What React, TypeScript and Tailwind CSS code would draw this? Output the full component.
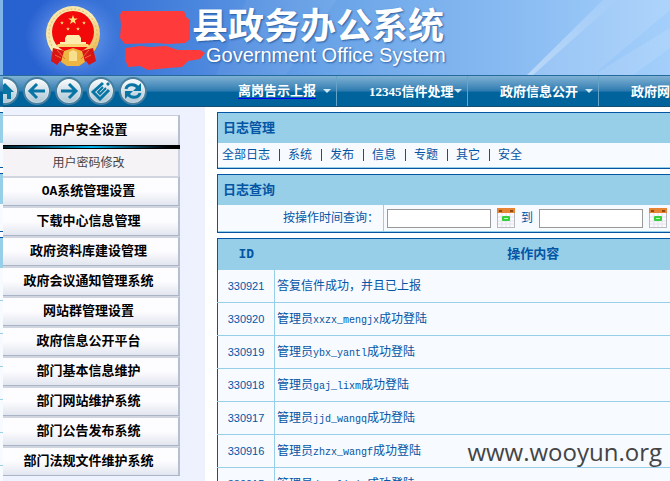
import type { ReactNode } from "react";

const cjk = "font-['Liberation_Sans','Noto_Sans_CJK_SC',sans-serif]";

const navItems = ["离岗告示上报", "12345信件处理", "政府信息公开", "政府网站管理"];

const sections = [
  "OA系统管理设置",
  "下载中心信息管理",
  "政府资料库建设管理",
  "政府会议通知管理系统",
  "网站群管理设置",
  "政府信息公开平台",
  "部门基本信息维护",
  "部门网站维护系统",
  "部门公告发布系统",
  "部门法规文件维护系统",
];

const filters = ["全部日志", "系统", "发布", "信息", "专题", "其它", "安全"];

const logs = [
  { id: "330921", user: "", text: "答复信件成功，并且已上报" },
  { id: "330920", user: "xxzx_mengjx", text: "成功登陆" },
  { id: "330919", user: "ybx_yantl", text: "成功登陆" },
  { id: "330918", user: "gaj_lixm", text: "成功登陆" },
  { id: "330917", user: "jjd_wangq", text: "成功登陆" },
  { id: "330916", user: "zhzx_wangf", text: "成功登陆" },
  { id: "330915", user: "dsq_lixia", text: "成功登陆" },
];

function Emblem() {
  const star = (cx: number, cy: number, r: number) => {
    const pts = Array.from({ length: 10 }, (_, i) => {
      const a = -Math.PI / 2 + (i * Math.PI) / 5;
      const q = i % 2 ? r * 0.4 : r;
      return `${cx + q * Math.cos(a)},${cy + q * Math.sin(a)}`;
    }).join(" ");
    return <polygon points={pts} fill="#ffe27a" />;
  };
  return (
    <svg width="60" height="66" viewBox="0 0 60 66" aria-hidden="true">
      <defs>
        <linearGradient id="gold" x1="0" y1="0" x2="1" y2="1">
          <stop offset="0" stopColor="#f4dfa0" />
          <stop offset=".5" stopColor="#fbeeb8" />
          <stop offset="1" stopColor="#e8a92c" />
        </linearGradient>
      </defs>
      <ellipse cx="32" cy="31" rx="27" ry="28" fill="#1c3f8c" fillOpacity=".35" />
      <ellipse cx="32" cy="30" rx="27" ry="28" fill="url(#gold)" />
      <ellipse cx="32" cy="30" rx="24" ry="25" fill="none" stroke="#e3b860" strokeWidth="1" strokeDasharray="2 2" />
      <circle cx="32" cy="28" r="21" fill="#f20a0a" />
      {star(32, 16, 5)}
      {star(21, 19, 2)}
      {star(43, 19, 2)}
      {star(27, 25, 2)}
      {star(37, 25, 2)}
      <path d="M24 34l2-3h12l2 3v4h5v3H19v-3h5z" fill="#ffedae" />
      <path d="M17 40h30l2 3H15z" fill="#fbd572" />
      <path d="M12 44l12 3 8-2 8 2 12-3 3 13-7 4-3-4-6 4H25l-6-4-3 4-6-4z" fill="#d81414" />
      <path d="M23 47l9-3 9 3 3 11-6 4H26l-6-4z" fill="#edb541" />
      <path d="M28 48l4-2 4 2v9h-8z" fill="#f8df8d" />
      <path d="M14 51l6 3M50 51l-6 3M16 46l8 9M48 46l-8 9" stroke="#f36a3a" fill="none" />
    </svg>
  );
}

function Scribble() {
  return (
    <svg width="86" height="60" viewBox="0 0 86 60" aria-hidden="true">
      <path d="M2 1h62l2 6 4 3v19l-5 4-16 1-14-1-30 1-5-6 1-13-1-10z" fill="#ff3a3a" />
      <path d="M6 38l14-2 10 1 16-1 12 4h22l5 3-5 6-12 2-6 6-14 1-20 2-8-4-12 1-3-8z" fill="#ff3a3a" />
    </svg>
  );
}

function Round({ label, children }: { label: string; children: ReactNode }) {
  return (
    <button
      type="button"
      aria-label={label}
      className="flex size-7 shrink-0 items-center justify-center rounded-full border-2 border-[#487f9f] bg-linear-to-b from-[#fafcfd] to-[#aac4d3] shadow-[inset_0_0_2px_#fff]"
    >
      <svg width="20" height="20" viewBox="0 0 20 20" fill="none" stroke="#0875a5" strokeWidth="3" className="shrink-0" aria-hidden="true">
        {children}
      </svg>
    </button>
  );
}

function Calendar() {
  return (
    <button type="button" aria-label="选择日期" className="block shrink-0">
      <svg width="18" height="20" viewBox="0 0 18 20" aria-hidden="true">
        <path d="M0 0h18v20H0z" fill="#b9b9c2" />
        <path d="M1 5h16v14H1z" fill="#fbfbfe" />
        <path d="M1 9h16M1 13h16M1 16h16M5 5v14M9 5v14M13 5v14" stroke="#e4e0ec" />
        <path d="M0 0h18v5H0z" fill="#e68434" />
        <path d="M2 3h3M13 3h3" stroke="#8f4a14" strokeWidth="2" />
        <rect x="5" y="8" width="8" height="5" rx="1" fill="#35cf3c" />
        <path d="M7 10.5h4" stroke="#b9ffb9" strokeWidth="1" />
      </svg>
    </button>
  );
}

function Panel({ title, children }: { title: string; children: ReactNode }) {
  return (
    <section className="border border-[#0455a4]">
      <h2 className="h-[30px] bg-[#97cee8] pl-[5px] text-[13px] leading-[30px] font-bold">{title}</h2>
      {children}
    </section>
  );
}

export default function App() {
  return (
    <div className={`flex h-screen overflow-hidden bg-white text-[12px] text-[#0455a4] ${cjk}`}>
      <div className="flex w-[3px] shrink-0 flex-col">
        <div className="h-[75px] shrink-0 bg-[#80b5ea]" />
        <div className="h-8 shrink-0 border-y border-[#256a9c] bg-linear-to-b from-[#7fb1d4] via-[#2f7eb2] via-48% to-[#00639c] to-55%" />
        <div className="mt-[5px] h-[31px] shrink-0 border-t border-[#0455a4] bg-[#97cee8]" />
        <div className="h-[25px] shrink-0 border-b border-[#0455a4] bg-[#f7faff]" />
        <div className="mt-[5px] h-[31px] shrink-0 border-t border-[#0455a4] bg-[#97cee8]" />
        <div className="h-7 shrink-0 border-b border-[#0455a4] bg-[#f7faff]" />
        <div className="mt-[5px] h-[31px] shrink-0 border-t border-[#0455a4] bg-[#97cee8]" />
        {logs.map((l) => (
          <div key={l.id} className="h-[33px] shrink-0 border-b border-[#97cee8] bg-[#f7faff]" />
        ))}
      </div>

      <div className="flex min-w-0 flex-1 flex-col overflow-hidden">
        <header className="relative flex h-[75px] shrink-0 overflow-hidden bg-linear-to-r from-[#2861d0] from-5% via-[#6ba5e8] via-50% to-[#a4cffb]">
          <svg className="absolute inset-0 size-full" viewBox="0 0 667 75" preserveAspectRatio="none" aria-hidden="true">
            <defs>
              <radialGradient id="halo">
                <stop offset="0" stopColor="#a9c5ff" stopOpacity=".9" />
                <stop offset="1" stopColor="#6e9df0" stopOpacity="0" />
              </radialGradient>
              <linearGradient id="beam" x1="0" y1="1" x2="1" y2="0">
                <stop offset="0" stopColor="#fff" stopOpacity=".4" />
                <stop offset="1" stopColor="#fff" stopOpacity=".1" />
              </linearGradient>
            </defs>
            <ellipse cx="69" cy="37" rx="48" ry="44" fill="url(#halo)" />
            <path d="M213 75L243 0h90L283 75z" fill="#fff" fillOpacity=".05" />
            <path d="M524 75L600 0h14L530 75z" fill="url(#beam)" />
            <path d="M530 75L614 0h53v10L590 75z" fill="#fff" fillOpacity=".1" />
            <path d="M590 75L667 28v20L630 75z" fill="#fff" fillOpacity=".1" />
          </svg>
          <div className="relative flex pt-1 pl-[38px]">
            <Emblem />
          </div>
          <div className="relative pt-[10px] pl-[19px]">
            <Scribble />
          </div>
          <div className="relative -ml-[14px] pt-[9px] whitespace-nowrap text-white [text-shadow:1px_1px_2px_#285c9e]">
            <h1 className="text-[36px] leading-[36px] font-bold">县政务办公系统</h1>
            <p className="pl-[14px] text-[20px] leading-[20px]">Government Office System</p>
          </div>
        </header>

        <nav className="flex h-8 shrink-0 items-center border-t border-b border-t-[#256a9c] border-b-[#164f74] bg-linear-to-b from-[#7fb1d4] via-[#2f7eb2] via-48% to-[#00639c] to-55%">
          <div className="-ml-3 flex w-[215px] shrink-0 gap-1">
            <Round label="首页">
              <path d="M1 11L10 2l9 9h-3v7h-4v-5H8v5H4v-7z" fill="#0875a5" stroke="none" />
            </Round>
            <Round label="后退">
              <path d="M18 10H4M10 3l-7 7 7 7" />
            </Round>
            <Round label="前进">
              <path d="M2 10h14M10 3l7 7-7 7" />
            </Round>
            <Round label="编辑">
              <path d="M12 2L2 11l7 7 9-9" strokeWidth="3" />
              <path d="M12 6l-5 5 2 2 6-6" strokeWidth="2" />
              <path d="M17 1l2 2-2 2-2-2z" fill="#0875a5" stroke="none" />
            </Round>
            <Round label="刷新">
              <path d="M3 8c1-5 9-6 12-1M17 12c-1 5-9 6-12 1" />
              <path d="M18 2v8h-8zM2 18v-8h8z" fill="#0875a5" stroke="none" />
            </Round>
          </div>
          {navItems.map((item, i) => (
            <a
              key={item}
              href="#"
              className="relative flex h-full w-[131px] shrink-0 items-center border-r border-[#65a3c9] pl-8 font-['Liberation_Serif','Noto_Sans_CJK_SC',serif] font-bold whitespace-nowrap text-white"
            >
              <span className={i === 0 ? "border-b border-[#0000ff] text-[13px] leading-[15px]" : "text-[13px] leading-[15px]"}>{item}</span>
              <span className="absolute top-[13px] right-[5px] border-x-4 border-t-4 border-x-transparent border-t-[#cfeaf7]" />
            </a>
          ))}
        </nav>

        <div className="flex min-h-0 flex-1">
          <aside className="w-[202px] shrink-0 bg-[#eef2fe] pt-2">
            <ul className="w-[177px] font-['Liberation_Mono','Noto_Sans_CJK_SC',monospace] text-[13px] font-bold text-black">
              <li>
                <button type="button" className="block h-[30px] w-full border-t border-r-2 border-t-[#c6ccd8] border-r-[#b5bfcd] bg-linear-to-b from-[#fdfcff] from-50% to-[#e2e6ef] pr-1">
                  用户安全设置
                </button>
                <div className="h-1 border-y border-black bg-linear-to-r from-[#00202c] via-[#00b4f0] to-black" />
                <a href="#" className="block h-[27px] border-r-2 border-[#ccd2df] bg-[#f5f3f6] pr-1 text-center text-[12px] leading-[30px] font-normal text-[#444]">
                  用户密码修改
                </a>
              </li>
              {sections.map((s) => (
                <li key={s}>
                  <button
                    type="button"
                    className="block h-[30px] w-full border-t-2 border-r-2 border-b border-t-[#d0d5e0] border-r-[#b5bfcd] border-b-[#a9b5c6] bg-linear-to-b from-[#fdfcff] from-50% to-[#e2e6ef] pr-1 whitespace-nowrap"
                  >
                    {s}
                  </button>
                </li>
              ))}
            </ul>
          </aside>

          <main className="min-w-0 flex-1 overflow-hidden pt-[5px] pl-3">
            <div className="flex min-w-[576px] flex-col gap-[5px]">
              <Panel title="日志管理">
                <div className="flex h-[25px] items-center border-b border-[#97cee8] bg-[#f7faff] pl-1">
                  {filters.map((f, i) => (
                    <span key={f} className="flex items-center">
                      {i > 0 && <span className="mr-2 ml-[9px] h-3 w-px bg-[#0455a4]" />}
                      <a href="#">{f}</a>
                    </span>
                  ))}
                </div>
              </Panel>

              <Panel title="日志查询">
                <div className="flex h-[27px] items-stretch border-b border-[#97cee8] bg-[#f7faff]">
                  <label htmlFor="from" className="w-[166px] border-r border-[#97cee8] pr-1 text-right leading-[26px]">
                    按操作时间查询：
                  </label>
                  <div className="flex items-center pl-[3px]">
                    <input id="from" className="h-[19px] w-[104px] border border-[#999] bg-white px-1" />
                    <span className="pl-[6px]"><Calendar /></span>
                    <label htmlFor="to" className="px-[6px]">到</label>
                    <input id="to" className="h-[19px] w-[104px] border border-[#999] bg-white px-1" />
                    <span className="pl-[6px]"><Calendar /></span>
                  </div>
                </div>
              </Panel>

              <table className="w-full table-fixed border-collapse border border-[#0455a4] bg-[#f7faff]">
                <thead>
                  <tr className="h-[31px] bg-[#97cee8] text-[13px]">
                    <th className="w-[57px] font-['DejaVu_Sans_Mono',monospace]">ID</th>
                    <th>操作内容</th>
                  </tr>
                </thead>
                <tbody>
                  {logs.map((l) => (
                    <tr key={l.id} className="h-[33px]">
                      <td className="border border-[#97cee8] border-l-[#0455a4] p-0 text-center text-[11px]">{l.id}</td>
                      <td className="border border-[#97cee8] p-0 pl-[2px]">
                        {l.user && "管理员"}
                        <span className="font-['Liberation_Mono',monospace] text-[10px]">{l.user}</span>
                        {l.text}
                      </td>
                    </tr>
                  ))}
                </tbody>
              </table>
            </div>
          </main>
        </div>
      </div>

      <div className="pointer-events-none absolute right-[8px] bottom-[13px] font-['Open_Sans',sans-serif] text-[24px] leading-[32px] text-[#444]">
        www.wooyun.org
      </div>
    </div>
  );
}
